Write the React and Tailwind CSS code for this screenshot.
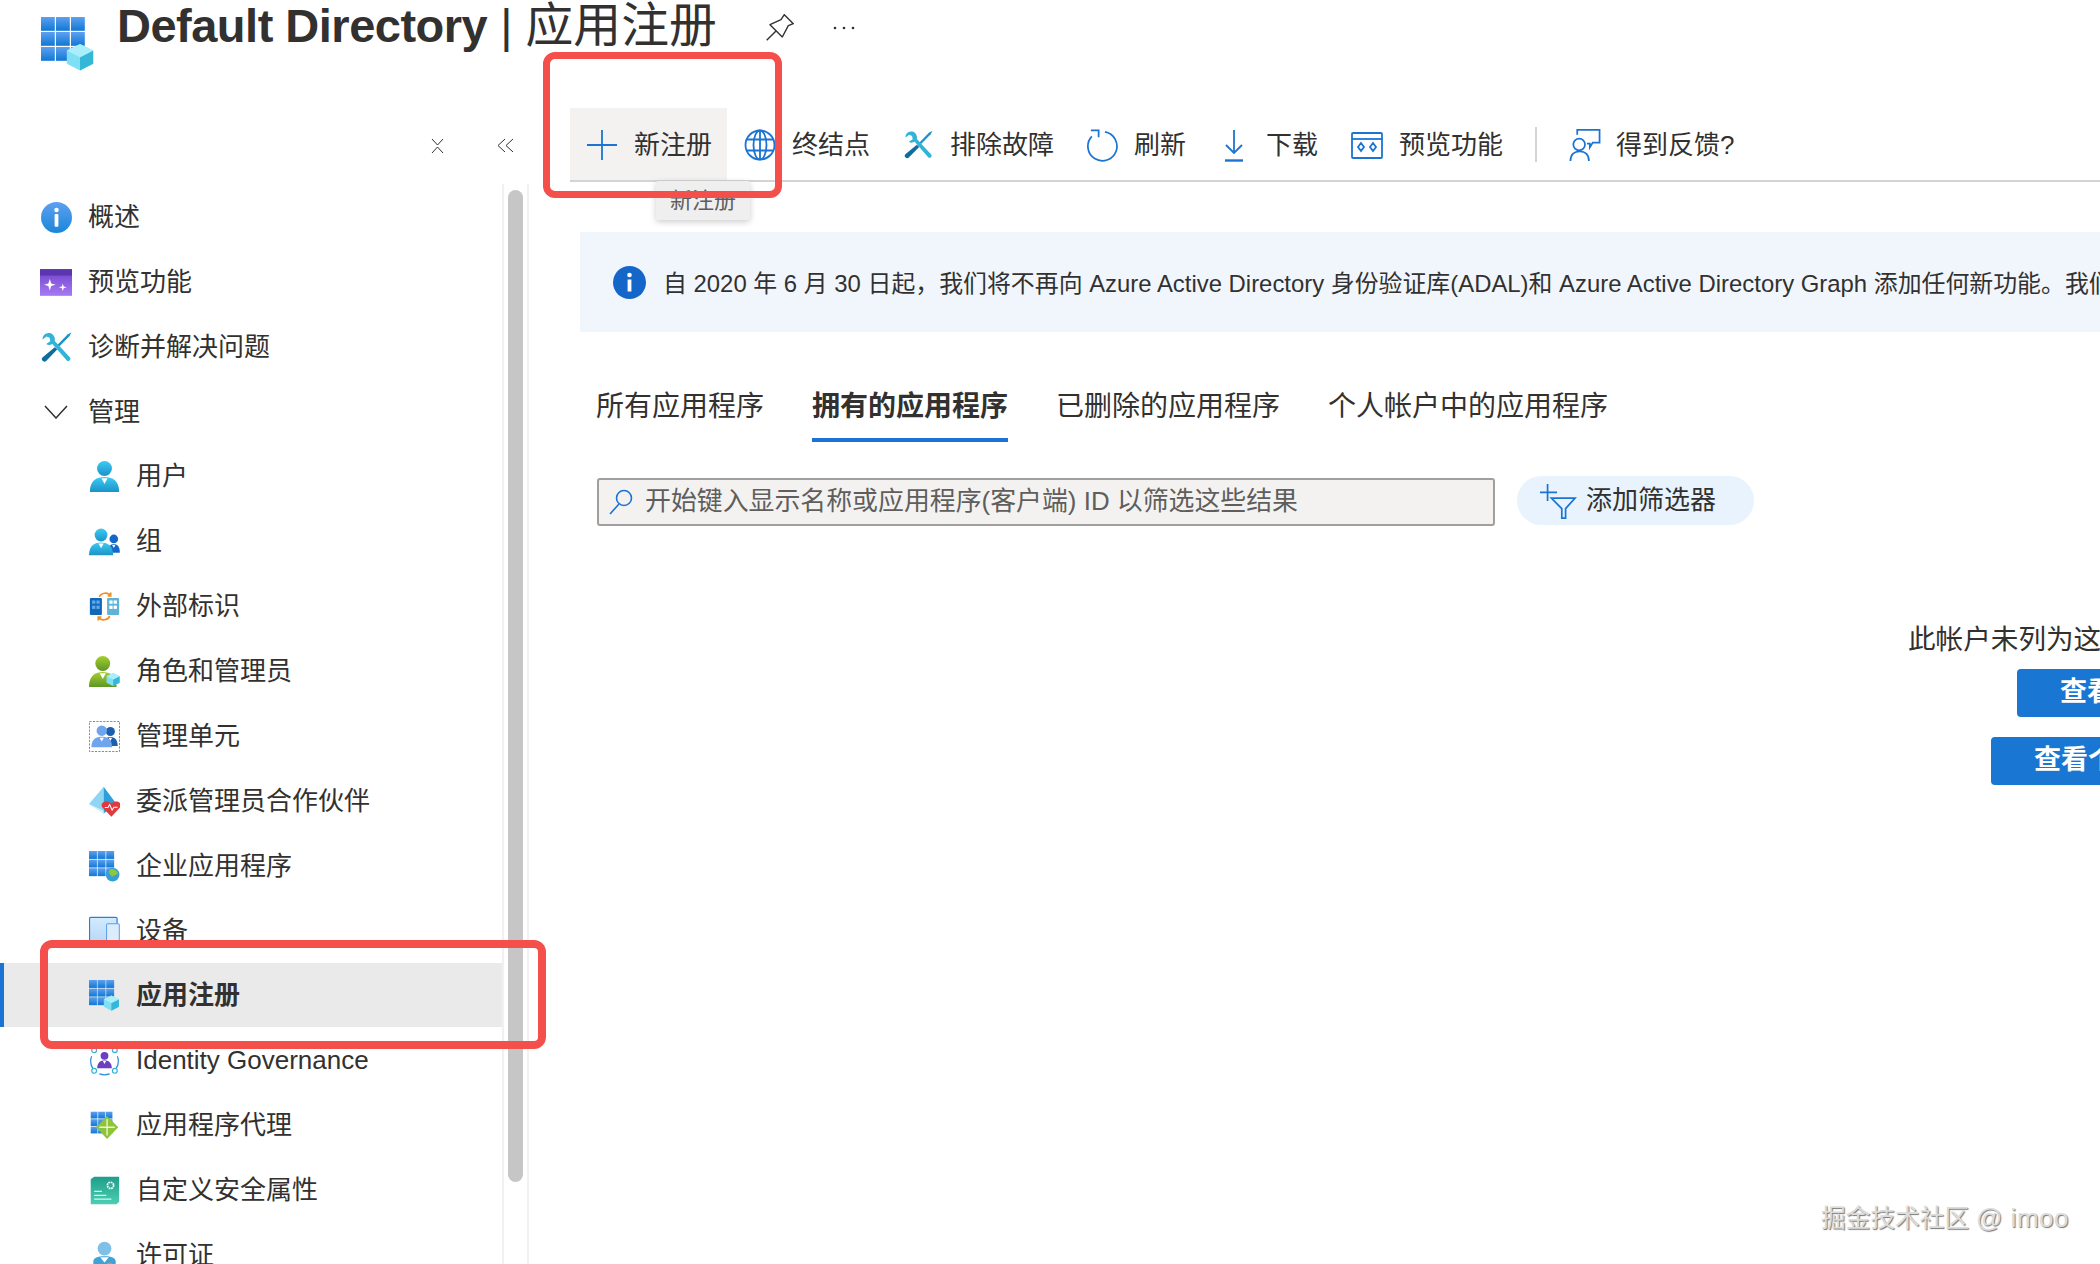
const Defs = () => (
  <svg className="absolute w-0 h-0">
    <defs>
      <linearGradient id="gridBlue" x1="0" y1="0" x2="0" y2="1"><stop offset="0" stopColor="#5ea0ef" /><stop offset="1" stopColor="#0f78d4" /></linearGradient>
      <linearGradient id="infoBlue" x1="0" y1="0" x2="0" y2="1"><stop offset="0" stopColor="#5ea0ef" /><stop offset="1" stopColor="#1a86d9" /></linearGradient>
      <linearGradient id="userCyan" x1="0" y1="0" x2="0" y2="1"><stop offset="0" stopColor="#3ccbf4" /><stop offset="1" stopColor="#1b93c7" /></linearGradient>
      <linearGradient id="userGreen" x1="0" y1="0" x2="0" y2="1"><stop offset="0" stopColor="#a5d02f" /><stop offset="1" stopColor="#5e9624" /></linearGradient>
      <linearGradient id="purple" x1="0" y1="0" x2="0" y2="1"><stop offset="0" stopColor="#6f42c9" /><stop offset="1" stopColor="#a67af4" /></linearGradient>
      <linearGradient id="teal" x1="0" y1="0" x2="0" y2="1"><stop offset="0" stopColor="#1f9e8b" /><stop offset="1" stopColor="#4bcfb2" /></linearGradient>
      <linearGradient id="sky" x1="0" y1="0" x2="0" y2="1"><stop offset="0" stopColor="#d2ebff" /><stop offset="1" stopColor="#bad8f5" /></linearGradient>
    </defs>
  </svg>
)

const Grid = ({ n = 15 }) => (
  <>
    {[0, 1, 2].map((r) => [0, 1, 2].map((c) => (
      <rect key={`${r}${c}`} x={c * (n / 3)} y={r * (n / 3)} width={n / 3 - 0.4} height={n / 3 - 0.4} fill="url(#gridBlue)" />
    )))}
  </>
)

const Cube = ({ x = 13, y = 13.4, s = 4.4 }) => (
  <g>
    <path d={`M${x} ${y - s}L${x + s} ${y - s / 2}V${y + s / 2}L${x} ${y + s}L${x - s} ${y + s / 2}V${y - s / 2}Z`} fill="#7fe0f5" />
    <path d={`M${x} ${y}L${x + s} ${y - s / 2}V${y + s / 2}L${x} ${y + s}Z`} fill="#35b8d8" />
    <path d={`M${x} ${y}L${x - s} ${y - s / 2}L${x} ${y - s}L${x + s} ${y - s / 2}Z`} fill="#a9eefa" />
  </g>
)

const AppRegIcon = ({ className }) => (
  <svg viewBox="0 0 18 18" className={className}><Grid /><Cube /></svg>
)

const InfoIcon = () => (
  <svg viewBox="0 0 18 18" className="w-[31px] h-[31px]">
    <circle cx="9" cy="9" r="9" fill="url(#infoBlue)" />
    <circle cx="9" cy="4.6" r="1.3" fill="#fff" />
    <rect x="7.9" y="7" width="2.2" height="7.4" rx="0.6" fill="#fff" />
  </svg>
)

const PreviewIcon = () => (
  <svg viewBox="0 0 18 15" className="w-[32px] h-[27px]">
    <rect width="18" height="15" fill="url(#purple)" />
    <rect width="18" height="3.6" fill="#5c35b0" />
    <path d="M5.5 5.5L6.3 8L8.8 8.7L6.3 9.5L5.5 12L4.7 9.5L2.3 8.7L4.7 8Z" fill="#fff" />
    <path d="M12.8 8L13.3 9.7L15 10.2L13.3 10.7L12.8 12.4L12.3 10.7L10.6 10.2L12.3 9.7Z" fill="#fff" />
  </svg>
)

const ToolsIcon = ({ className }) => (
  <svg viewBox="0 0 18 18" className={className}>
    <path d="M17.6 0.3L16.6 2.3L10.6 8.4L9.6 7.4L15.6 1.3Z" fill="#1b93c7" />
    <path d="M8 8.8L9.4 10.2L3 16.8C2.4 17.4 1.4 17.4 0.8 16.6C0.2 16 0.4 15.2 1 14.6Z" fill="#0f6d9e" />
    <path d="M5.2 0.6C2.8 0.2 0.6 2 1 4.4L3.2 2.6L5 3.4L5.4 5.4L3 7C4.2 7.8 5.6 7.6 6.6 7L15 16.6C15.8 17.6 17.6 16.4 17 15L8 5.2C8.4 3.2 7.2 1 5.2 0.6Z" fill="#32b3d8" />
  </svg>
)

const Chevron = () => (
  <svg viewBox="0 0 24 14" className="w-[24px] h-[14px]" fill="none" stroke="#323130" strokeWidth="1.5"><path d="M1 1L12 13L23 1" /></svg>
)

const UserShape = ({ cx = 9, fill = 'url(#userCyan)', w = 17, top = 0, h = 18 }) => (
  <g>
    <circle cx={cx} cy={top + h * 0.24} r={h * 0.24} fill={fill} />
    <path d={`M${cx - w / 2} ${top + h}C${cx - w / 2} ${top + h * 0.62} ${cx - w / 4} ${top + h * 0.52} ${cx} ${top + h * 0.52}C${cx + w / 4} ${top + h * 0.52} ${cx + w / 2} ${top + h * 0.62} ${cx + w / 2} ${top + h}Z`} fill={fill} />
    <path d={`M${cx - h * 0.1} ${top + h * 0.56}H${cx + h * 0.1}L${cx} ${top + h * 0.74}Z`} fill="#fff" />
  </g>
)

const UserIcon = () => <svg viewBox="0 0 18 18" className="w-[31px] h-[31px]"><UserShape /></svg>
const GroupIcon = () => (
  <svg viewBox="0 0 18 18" className="w-[31px] h-[31px]">
    <UserShape cx={14.4} fill="#1467c8" w={7} top={5} h={10.5} />
    <UserShape cx={7} w={14} top={1.5} h={15.5} />
  </svg>
)
const ExternalIcon = () => (
  <svg viewBox="0 0 18 18" className="w-[31px] h-[31px]" fill="none">
    <rect x="0.5" y="4" width="7" height="10" rx="0.6" fill="#1168b8" />
    <rect x="10.5" y="4" width="7" height="10" rx="0.6" fill="#5fb3d6" />
    {[1.8, 4.3].map((x) => [5.5, 8.5].map((y) => <rect key={`${x}${y}`} x={x} y={y} width="1.9" height="1.9" fill="#61a8e8" />))}
    {[11.8, 14.3].map((x) => [5.5, 8.5].map((y) => <rect key={`${x}${y}`} x={x} y={y} width="1.9" height="1.9" fill="#fff" />))}
    <path d="M6 3.4C7 0.8 11 0.6 12.6 2.8M12.6 0.9V2.9H10.8" stroke="#f28c1d" strokeWidth="1" />
    <path d="M12 14.6C11 17.2 7 17.4 5.4 15.2M5.4 17.1V15.1H7.2" stroke="#f28c1d" strokeWidth="1" />
  </svg>
)
const RoleIcon = () => (
  <svg viewBox="0 0 18 18" className="w-[31px] h-[31px]">
    <UserShape cx={8} fill="url(#userGreen)" w={16} />
    <Cube x={14} y={13.6} s={3.8} />
  </svg>
)
const AdminUnitIcon = () => (
  <svg viewBox="0 0 18 18" className="w-[31px] h-[31px]">
    <rect x="0.25" y="0.25" width="17.5" height="17.5" fill="none" stroke="#2f7fd0" strokeWidth="0.5" strokeDasharray="1.3 0.7" />
    <UserShape cx={12.4} fill="#1b5fae" w={8.5} top={3.5} h={11} />
    <UserShape cx={7.4} fill="#6ea5ec" w={12} top={2.6} h={12.6} />
  </svg>
)
const DelegatedIcon = () => (
  <svg viewBox="0 0 18 18" className="w-[31px] h-[31px]">
    <path d="M8.5 0.5L0 10.5L8.5 16Z" fill="#8fd6f2" />
    <path d="M8.5 0.5L16 10.5L8.5 16Z" fill="#2f9fdc" />
    <path d="M0 10.5L8.5 16L8.5 14.4Z" fill="#d8f1fb" />
    <path d="M13 17.8L7.8 12.5C6 10 9.4 7.6 13 10C16.6 7.6 19.6 10 18 12.5Z" fill="#e2393f" />
    <path d="M9.2 12.5H11L12 10.8L13.4 14L14.5 12.3H16.6" fill="none" stroke="#fff" strokeWidth="0.6" />
  </svg>
)
const EnterpriseIcon = () => (
  <svg viewBox="0 0 18 18" className="w-[31px] h-[31px]">
    <Grid />
    <circle cx="13.7" cy="13.7" r="4" fill="#35a0d8" />
    <path d="M12 10.8C13.5 10 16 11 16.8 12.8C16 14.5 14 14 13.6 15C12.6 14.4 11 12.6 12 10.8Z" fill="#8dc63f" />
  </svg>
)
const DevicesIcon = () => (
  <svg viewBox="0 0 18 18" className="w-[31px] h-[31px]">
    <rect x="0.3" y="0.8" width="16" height="14" rx="0.7" fill="url(#sky)" stroke="#2f7fd0" strokeWidth="0.7" />
    <rect x="10.2" y="4.5" width="7.4" height="13" rx="0.6" fill="#dcecfb" stroke="#5ea0ef" strokeWidth="0.6" />
  </svg>
)
const GovernanceIcon = () => (
  <svg viewBox="0 0 18 18" className="w-[31px] h-[31px]" fill="none">
    <path d="M1.5 6.5C0.6 9 1 12 2.5 14M15.5 14C17 12 17.4 9 16.5 6.5M6 16.8C7.5 17.3 10.5 17.3 12 16.8M6 1.4C7.5 0.9 10.5 0.9 12 1.4" stroke="#2f8fd8" strokeWidth="0.7" />
    {[[3, 3], [15, 3], [3, 15], [15, 15]].map(([x, y]) => <circle key={`${x}${y}`} cx={x} cy={y} r="1.4" fill="#fff" stroke="#32b3d8" strokeWidth="0.7" />)}
    <UserShape cx={9} fill="#6b3fc0" w={8.5} top={4} h={9.5} />
  </svg>
)
const ProxyIcon = () => (
  <svg viewBox="0 0 18 18" className="w-[31px] h-[31px]">
    <g transform="translate(1 1)"><Grid n={13} /></g>
    <path d="M10.5 3.5L17 10L10.5 16.8L4 10Z" fill="#8fc43a" />
    <path d="M10.5 5.2V14.8M6 10H15" stroke="#e8f6cf" strokeWidth="0.8" />
  </svg>
)
const AttributesIcon = () => (
  <svg viewBox="0 0 18 18" className="w-[31px] h-[31px]">
    <path d="M1 2.5L3 1H17.5V15.5L16 17H1Z" fill="url(#teal)" />
    <circle cx="12.5" cy="6" r="1.8" fill="none" stroke="#fff" strokeWidth="1" strokeDasharray="1 0.4" />
    <path d="M3 9.5H7.5M3 11.8H10M3 14H13" stroke="#d6f6ee" strokeWidth="0.8" />
  </svg>
)
const LicenseIcon = () => (
  <svg viewBox="0 0 18 18" className="w-[31px] h-[31px]">
    <circle cx="9" cy="5" r="4" fill="#7fc0e8" />
    <path d="M2.5 18V12.5C2.5 10.5 5 9.5 9 9.5C13 9.5 15.5 10.5 15.5 12.5V18Z" fill="#3ea3d8" />
    <path d="M6.5 10L9 13L11.5 10Z" fill="#fff" />
    <circle cx="12" cy="15" r="2" fill="#f28c1d" />
  </svg>
)

const navItems = [
  { label: '概述', icon: <InfoIcon /> },
  { label: '预览功能', icon: <PreviewIcon /> },
  { label: '诊断并解决问题', icon: <ToolsIcon className="w-[31px] h-[31px]" /> },
  { label: '管理', icon: <Chevron /> },
  { label: '用户', icon: <UserIcon />, sub: true },
  { label: '组', icon: <GroupIcon />, sub: true },
  { label: '外部标识', icon: <ExternalIcon />, sub: true },
  { label: '角色和管理员', icon: <RoleIcon />, sub: true },
  { label: '管理单元', icon: <AdminUnitIcon />, sub: true },
  { label: '委派管理员合作伙伴', icon: <DelegatedIcon />, sub: true },
  { label: '企业应用程序', icon: <EnterpriseIcon />, sub: true },
  { label: '设备', icon: <DevicesIcon />, sub: true },
  { label: '应用注册', icon: <AppRegIcon className="w-[31px] h-[31px]" />, sub: true, active: true },
  { label: 'Identity Governance', icon: <GovernanceIcon />, sub: true },
  { label: '应用程序代理', icon: <ProxyIcon />, sub: true },
  { label: '自定义安全属性', icon: <AttributesIcon />, sub: true },
  { label: '许可证', icon: <LicenseIcon />, sub: true },
]

const blue = '#1b74d3'

const toolbar = [
  {
    label: '终结点', cls: 'ml-[17px]', gap: 'gap-[16px]',
    icon: (
      <svg viewBox="0 0 32 32" className="w-[32px] h-[32px]" fill="none" stroke={blue} strokeWidth="1.8">
        <circle cx="16" cy="16" r="14.5" /><ellipse cx="16" cy="16" rx="6.5" ry="14.5" /><path d="M3 10.5H29M3 21.5H29M16 1.5V30.5" />
      </svg>
    ),
  },
  { label: '排除故障', cls: 'ml-[34px]', gap: 'gap-[17px]', icon: <ToolsIcon className="w-[29px] h-[30px]" /> },
  {
    label: '刷新', cls: 'ml-[33px]', gap: 'gap-[16px]',
    icon: (
      <svg viewBox="0 0 32 34" className="w-[31px] h-[33px]" fill="none" stroke={blue} strokeWidth="1.8">
        <path d="M18.5 3A15 15 0 1 1 5 7.5" /><path d="M4 1.5H12V8.5" />
      </svg>
    ),
  },
  {
    label: '下载', cls: 'ml-[37px]', gap: 'gap-[21px]',
    icon: (
      <svg viewBox="0 0 22 33" className="w-[22px] h-[33px]" fill="none" stroke={blue} strokeWidth="1.8">
        <path d="M11 1V24M3 16L11 24L19 16" /><path d="M2 31.5H20" strokeWidth="2.4" />
      </svg>
    ),
  },
  {
    label: '预览功能', cls: 'ml-[33px]', gap: 'gap-[16px]',
    icon: (
      <svg viewBox="0 0 32 27" className="w-[32px] h-[27px]" fill="none" stroke={blue} strokeWidth="1.8">
        <rect x="1" y="1" width="30" height="25" rx="1" /><path d="M1 7H31" />
        <path d="M10 11L13 15L10 19L7 15ZM22 11L25 15L22 19L19 15Z" />
      </svg>
    ),
  },
]

const tabs = ['所有应用程序', '拥有的应用程序', '已删除的应用程序', '个人帐户中的应用程序']

function NavRow({ item }) {
  return (
    <div className={`flex items-center h-[64.88px] shrink-0 pt-[2px] border-l-4 ${item.active ? 'bg-[#ebeaea] border-[#1b74d3] font-bold' : 'border-transparent'}`}>
      {item.sub ? (
        <div className="ml-[85px] w-[31px] flex justify-center shrink-0">{item.icon}</div>
      ) : (
        <div className="ml-[36px] w-[32px] flex justify-center shrink-0">{item.icon}</div>
      )}
      <span className="ml-[16px] whitespace-nowrap">{item.label}</span>
    </div>
  )
}

export default function App() {
  return (
    <div className="relative w-[2100px] h-[1264px] overflow-hidden bg-white text-[#323130] text-[26px] font-['Liberation_Sans','Noto_Sans_CJK_SC',sans-serif]">
      <Defs />

      <header className="flex items-start h-[108px] pl-[41px]">
        <AppRegIcon className="w-[54px] h-[54px] mt-[17px] shrink-0" />
        <h1 className="ml-[22px] w-[649px] shrink-0 text-[47px] leading-[52px] whitespace-nowrap">
          <span className="font-bold tracking-[-0.5px]">Default Directory</span> | <span className="text-[47.8px]">应用注册</span>
        </h1>
        <svg viewBox="0 0 28 28" className="mt-[13px] w-[28px] h-[28px] shrink-0" fill="none" stroke="#323130" strokeWidth="1.4" strokeLinejoin="round">
          <path d="M18.3 1.7L27.3 10.7L22.3 12.7L16.3 24L4 11.7L15 6.7Z" /><path d="M0.7 27.3L10 18" />
        </svg>
        <svg viewBox="0 0 24 4" className="ml-[38px] mt-[26px] w-[24px] h-[4px] shrink-0" fill="#323130">
          <circle cx="3" cy="2" r="1.3" /><circle cx="12" cy="2" r="1.3" /><circle cx="21" cy="2" r="1.3" />
        </svg>
      </header>

      <div className="flex h-[1156px]">
        <aside className="w-[530px] shrink-0 flex flex-col">
          <div className="h-[76px] shrink-0 flex items-start pt-[30px] pl-[431px] gap-[53px]">
            <svg viewBox="0 0 13 16" className="w-[13px] h-[16px]" fill="none" stroke="#323130" strokeWidth="1"><path d="M1 1L6.5 7L12 1M1 15L6.5 9L12 15" /></svg>
            <svg viewBox="0 0 17 15" className="w-[17px] h-[15px]" fill="none" stroke="#323130" strokeWidth="1"><path d="M8 1L1 7.5L8 14M16 1L9 7.5L16 14" /></svg>
          </div>
          <div className="flex flex-1 min-h-0">
            <nav className="w-[502px] shrink-0 flex flex-col overflow-hidden">
              {navItems.map((item) => <NavRow key={item.label} item={item} />)}
            </nav>
            <div className="w-[27px] border-x-2 border-[#f1f1f1] px-[4px] pt-[6px]">
              <div className="h-[992px] rounded-full bg-[#c6c6c6]"></div>
            </div>
          </div>
        </aside>

        <main className="flex-1 min-w-0 overflow-hidden">
          <div className="flex items-center h-[74px] ml-[40px] border-b-2 border-[#d4d4d4]">
            <div className="flex items-center h-[72px] w-[157px] pl-[17px] pt-[2px] gap-[17px] bg-[#f3f2f1] shrink-0">
              <svg viewBox="0 0 30 30" className="w-[30px] h-[30px]" fill="none" stroke={blue} strokeWidth="1.8"><path d="M15 0V30M0 15H30" /></svg>
              <span>新注册</span>
            </div>
            {toolbar.map((t) => (
              <div key={t.label} className={`flex items-center shrink-0 pt-[2px] ${t.gap} ${t.cls}`}>
                {t.icon}
                <span>{t.label}</span>
              </div>
            ))}
            <div className="ml-[32px] w-[2px] h-[35px] bg-[#d4d4d4] shrink-0"></div>
            <div className="ml-[32px] flex items-center gap-[15px] shrink-0 pt-[2px]">
              <svg viewBox="0 0 32 34" className="w-[32px] h-[33px]" fill="none" stroke={blue} strokeWidth="1.8">
                <path d="M8 6V1H31V14H24L21 19V15H18" />
                <circle cx="10" cy="16" r="6" /><path d="M1 33C1 26 5 23 10.5 23C16 23 20 26 20 33" />
              </svg>
              <span className="whitespace-nowrap">得到反馈?</span>
            </div>
          </div>

          <div className="flex items-center h-[100px] mt-[50px] ml-[50px] pl-[33px] gap-[17px] bg-[#f1f6fd] text-[23.9px] whitespace-nowrap">
            <svg viewBox="0 0 33 33" className="w-[33px] h-[33px] shrink-0">
              <circle cx="16.5" cy="16.5" r="16.5" fill="#1467c8" />
              <circle cx="16.5" cy="9" r="2.3" fill="#fff" /><rect x="14.6" y="13.5" width="3.8" height="12" fill="#fff" />
            </svg>
            <span className="pt-[3px]">自 2020 年 6 月 30 日起，我们将不再向 Azure Active Directory 身份验证库(ADAL)和 Azure Active Directory Graph 添加任何新功能。我们将继续提供技术支持和安全更新</span>
          </div>

          <div className="flex mt-[40px] ml-[66px] gap-[48px] text-[28px]">
            {tabs.map((t, i) => (
              <div key={t} className={`flex items-center h-[70px] pt-[4px] border-b-4 whitespace-nowrap ${i === 1 ? 'font-bold border-[#1b74d3]' : 'border-transparent'}`}>{t}</div>
            ))}
          </div>

          <div className="flex items-center mt-[34px] ml-[67px] gap-[22px]">
            <div className="flex items-center w-[898px] h-[48px] pl-[10px] gap-[12px] bg-[#f3f2f1] border-2 border-[#a19f9d] rounded-[3px] text-[#605e5c] text-[25.9px]">
              <svg viewBox="0 0 24 26" className="w-[24px] h-[26px]" fill="none" stroke={blue} strokeWidth="1.6"><circle cx="15" cy="9" r="7.5" /><path d="M10 15L1 25" /></svg>
              <span className="whitespace-nowrap">开始键入显示名称或应用程序(客户端) ID 以筛选这些结果</span>
            </div>
            <div className="flex items-center w-[237px] h-[49px] mb-[2px] pl-[22px] gap-[9px] rounded-full bg-[#e8f3fd]">
              <svg viewBox="0 0 38 38" className="w-[38px] h-[36px]" fill="none" stroke={blue} strokeWidth="1.8"><path d="M8 1V19M0 10H18" /><path d="M12 16H37L27 27V37H23V27Z" /></svg>
              <span>添加筛选器</span>
            </div>
          </div>

          <div className="w-max h-[40px] pt-[1px] mt-[92px] ml-[1378px] text-[27.6px] leading-[40px] whitespace-nowrap">此帐户未列为这些应用程序的所有者</div>
          <div className="flex items-center w-[300px] h-[48px] pb-[2px] mt-[10px] ml-[1487px] pl-[43px] rounded-[4px] bg-[#1976d2] text-white font-bold text-[27px] whitespace-nowrap">查看目录中的所有应用程序</div>
          <div className="flex items-center w-[300px] h-[48px] pb-[2px] mt-[20px] ml-[1461px] pl-[43px] rounded-[4px] bg-[#1976d2] text-white font-bold text-[27px] whitespace-nowrap">查看个人帐户中的应用程序</div>
        </main>
      </div>

      {/* tooltip under the hovered button */}
      <div className="absolute left-[656px] top-[181px] w-[94px] h-[39px] flex items-center justify-center rounded-[2px] bg-[#efefef] shadow-[0_2px_6px_rgba(0,0,0,0.2)] text-[22px] text-[#605e5c]">新注册</div>

      {/* red annotation boxes */}
      <div className="absolute left-[543px] top-[52px] w-[239px] h-[146px] border-[7px] border-[#f44f4a] rounded-[12px]"></div>
      <div className="absolute left-[40px] top-[940px] w-[506px] h-[109px] border-[8px] border-[#f44f4a] rounded-[12px]"></div>

      <div className="absolute left-[1821px] top-[1203px] text-[24.7px] leading-[30px] whitespace-nowrap text-[#dcdcdc] [text-shadow:1px_1px_1px_#777]">掘金技术社区 <span className="text-[26px] tracking-[0.5px]">@ imoo</span></div>
    </div>
  )
}
